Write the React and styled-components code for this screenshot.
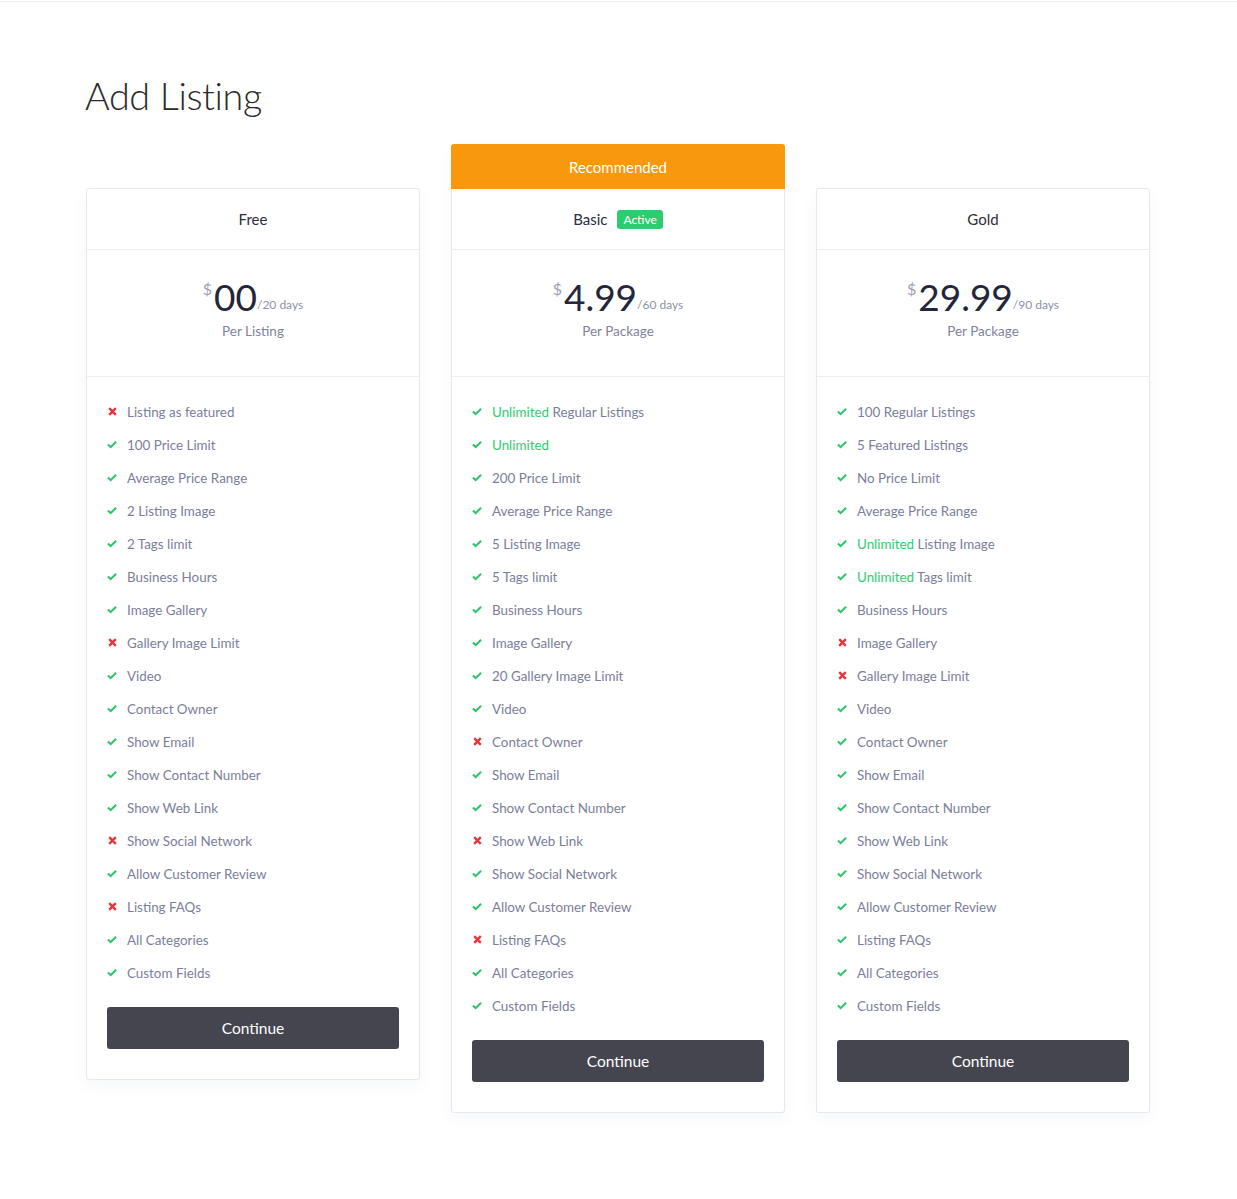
import React from 'react';
import styled, { createGlobalStyle } from 'styled-components';

/// /////////////////////////////////////////////
// styled
/// /////////////////////////////////////////////

const Global = createGlobalStyle`
  body {
    margin: 0;
    background: #fff;
    font-family: Lato, 'Noto Sans', sans-serif;
    color: #333;
  }
`;

const TopRule = styled.div`
  height: 1px;
  margin-top: 1px;
  background: #ececec;
`;

const Page = styled.div`
  width: 1064px;
  padding: 69px 0 86px 86px;
`;

const PageTitle = styled.h1`
  margin: 0 0 23px;
  font-family: Lato, sans-serif;
  font-weight: 300;
  font-size: 37.8px;
  line-height: 50px;
  color: #2b2b2b;
  letter-spacing: -0.4px;
  margin-left: -1px;
`;

const Plans = styled.div`
  display: flex;
  align-items: flex-start;
  gap: 31px;
`;

const Card = styled.div`
  flex: none;
  width: 334px;
  box-sizing: border-box;
  margin-top: ${p => (p.featured ? 0 : 44)}px;
  background: #fff;
  border: 1px solid #e6e8ef;
  border-radius: 3px;
  box-shadow: 0 6px 18px rgba(30, 40, 90, 0.04);
`;

const Ribbon = styled.div`
  height: 45px;
  margin: -1px -1px 0;
  display: flex;
  align-items: center;
  justify-content: center;
  background: #f8980d;
  color: #fff;
  font-size: 15px;
  border-radius: 3px 3px 0 0;
`;

const PlanName = styled.div`
  height: 60px;
  display: flex;
  align-items: center;
  justify-content: center;
  gap: 10px;
  font-size: 15px;
  color: #2a2d3e;
  border-bottom: 1px solid #eceef3;
`;

const Badge = styled.span`
  background: #2ecc71;
  color: #fff;
  font-size: 12px;
  line-height: 19px;
  padding: 0 6px;
  border-radius: 3px;
`;

const PriceBox = styled.div`
  height: 127px;
  display: flex;
  flex-direction: column;
  align-items: center;
  padding-top: 25px;
  box-sizing: border-box;
  border-bottom: 1px solid #eceef3;
`;

const Price = styled.div`
  display: flex;
  align-items: flex-start;
  color: #23263a;
`;

const Currency = styled.span`
  font-size: 16px;
  color: #9da1b6;
  margin-top: 4px;
  margin-right: 2px;
`;

const Amount = styled.span`
  font-size: 37px;
  line-height: 44px;
`;

const Period = styled.span`
  align-self: flex-end;
  font-size: 12px;
  color: #8d91a8;
  margin-bottom: 7px;
`;

const Unit = styled.div`
  margin-top: 4px;
  font-size: 13.5px;
  color: #7f839c;
`;

const Features = styled.ul`
  list-style: none;
  margin: 0;
  padding: 18px 20px 18px;
`;

const Feature = styled.li`
  height: 33px;
  display: flex;
  align-items: center;
  gap: 10px;
  font-size: 13.4px;
  color: #7a7e9a;
`;

const Mark = styled.span`
  width: 10px;
  display: flex;
  justify-content: center;
  color: ${p => (p.ok ? '#2ec46c' : '#e8343a')};
`;

const Highlight = styled.span`
  color: #2ecc71;
`;

const ContinueButton = styled.button`
  display: block;
  width: calc(100% - 40px);
  height: 42px;
  margin: 0 20px 30px;
  border: none;
  border-radius: 3px;
  background: #44454f;
  color: #fff;
  font-family: inherit;
  font-size: 15.5px;
  cursor: pointer;
`;

/// /////////////////////////////////////////////
// data
/// /////////////////////////////////////////////

const common = [
  ['Show Email'],
  ['Show Contact Number'],
  ['Show Web Link'],
  ['Show Social Network'],
  ['Allow Customer Review'],
  ['Listing FAQs'],
  ['All Categories'],
  ['Custom Fields'],
];

const plans = [
  {
    name: 'Free',
    amount: '00',
    period: '/20 days',
    unit: 'Per Listing',
    features: [
      ['Listing as featured', false],
      ['100 Price Limit'],
      ['Average Price Range'],
      ['2 Listing Image'],
      ['2 Tags limit'],
      ['Business Hours'],
      ['Image Gallery'],
      ['Gallery Image Limit', false],
      ['Video'],
      ['Contact Owner'],
      ['Show Email'],
      ['Show Contact Number'],
      ['Show Web Link'],
      ['Show Social Network', false],
      ['Allow Customer Review'],
      ['Listing FAQs', false],
      ['All Categories'],
      ['Custom Fields'],
    ],
  },
  {
    name: 'Basic',
    featured: true,
    active: true,
    amount: '4.99',
    period: '/60 days',
    unit: 'Per Package',
    features: [
      ['Regular Listings', true, 'Unlimited'],
      ['', true, 'Unlimited'],
      ['200 Price Limit'],
      ['Average Price Range'],
      ['5 Listing Image'],
      ['5 Tags limit'],
      ['Business Hours'],
      ['Image Gallery'],
      ['20 Gallery Image Limit'],
      ['Video'],
      ['Contact Owner', false],
      ['Show Email'],
      ['Show Contact Number'],
      ['Show Web Link', false],
      ['Show Social Network'],
      ['Allow Customer Review'],
      ['Listing FAQs', false],
      ['All Categories'],
      ['Custom Fields'],
    ],
  },
  {
    name: 'Gold',
    amount: '29.99',
    period: '/90 days',
    unit: 'Per Package',
    features: [
      ['100 Regular Listings'],
      ['5 Featured Listings'],
      ['No Price Limit'],
      ['Average Price Range'],
      ['Listing Image', true, 'Unlimited'],
      ['Tags limit', true, 'Unlimited'],
      ['Business Hours'],
      ['Image Gallery', false],
      ['Gallery Image Limit', false],
      ['Video'],
      ['Contact Owner'],
      ...common,
    ],
  },
];

/// /////////////////////////////////////////////
// component
/// /////////////////////////////////////////////

const Check = () => (
  <svg width="11" height="9" viewBox="0 0 11 9">
    <path d="M1 4.6 L4 7.4 L10 1.4" fill="none" stroke="currentColor" strokeWidth="2.3" />
  </svg>
);

const Cross = () => (
  <svg width="9" height="9" viewBox="0 0 9 9">
    <path d="M1.2 1.2 L7.8 7.8 M7.8 1.2 L1.2 7.8" fill="none" stroke="currentColor" strokeWidth="2.4" />
  </svg>
);

const Plan = ({ plan }) => (
  <Card featured={plan.featured}>
    {plan.featured && <Ribbon>Recommended</Ribbon>}
    <PlanName>
      {plan.name}
      {plan.active && <Badge>Active</Badge>}
    </PlanName>
    <PriceBox>
      <Price>
        <Currency>$</Currency>
        <Amount>{plan.amount}</Amount>
        <Period>{plan.period}</Period>
      </Price>
      <Unit>{plan.unit}</Unit>
    </PriceBox>
    <Features>
      {plan.features.map(([label, ok = true, hi], i) => (
        <Feature key={i}>
          <Mark ok={ok}>{ok ? <Check /> : <Cross />}</Mark>
          <span>
            {hi && <Highlight>{hi}</Highlight>}
            {hi && label ? ' ' : ''}
            {label}
          </span>
        </Feature>
      ))}
    </Features>
    <ContinueButton>Continue</ContinueButton>
  </Card>
);

export default function App() {
  return (
    <>
      <Global />
      <TopRule />
      <Page>
        <PageTitle>Add Listing</PageTitle>
        <Plans>
          {plans.map(p => (
            <Plan key={p.name} plan={p} />
          ))}
        </Plans>
      </Page>
    </>
  );
}
